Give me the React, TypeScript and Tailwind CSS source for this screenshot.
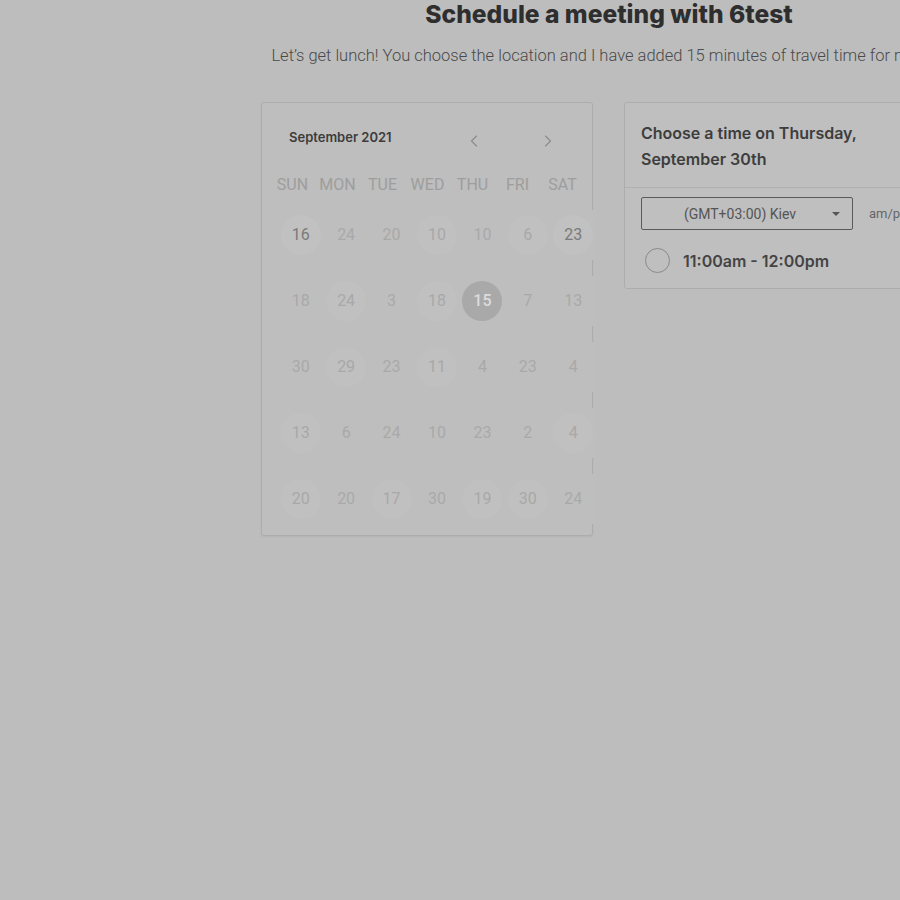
import React from 'react';
import { ChevronLeft, ChevronRight } from 'lucide-react';

type Day = { n: number; mark?: 'strong' | 'faint' | 'selected' };

const weekdays = ['SUN', 'MON', 'TUE', 'WED', 'THU', 'FRI', 'SAT'];

const weeks: Day[][] = [
  [{ n: 16, mark: 'strong' }, { n: 24 }, { n: 20 }, { n: 10, mark: 'faint' }, { n: 10 }, { n: 6, mark: 'faint' }, { n: 23, mark: 'strong' }],
  [{ n: 18 }, { n: 24, mark: 'faint' }, { n: 3 }, { n: 18, mark: 'faint' }, { n: 15, mark: 'selected' }, { n: 7 }, { n: 13 }],
  [{ n: 30 }, { n: 29, mark: 'faint' }, { n: 23 }, { n: 11, mark: 'faint' }, { n: 4 }, { n: 23 }, { n: 4 }],
  [{ n: 13, mark: 'faint' }, { n: 6 }, { n: 24 }, { n: 10 }, { n: 23 }, { n: 2 }, { n: 4, mark: 'faint' }],
  [{ n: 20, mark: 'faint' }, { n: 20 }, { n: 17, mark: 'faint' }, { n: 30 }, { n: 19, mark: 'faint' }, { n: 30, mark: 'faint' }, { n: 24 }],
];

const inter = "font-['Inter','Noto_Sans',sans-serif]";
const roboto = "font-['Roboto','Liberation_Sans',sans-serif]";

const DayCell = ({ day }: { day: Day }) => {
  let circle = '';
  let text = 'text-[#a9a9a9]';
  if (day.mark === 'strong') {
    circle = 'bg-[#c1c1c1]';
    text = 'text-[#7a7a7a]';
  } else if (day.mark === 'faint') {
    circle = 'bg-[#c0c0c0]';
    text = 'text-[#a8a8a8]';
  } else if (day.mark === 'selected') {
    circle = 'bg-[#a9a9a9]';
    text = 'text-[#dcdcdc] font-medium';
  }
  return (
    <div className="h-[50px] bg-[#bebebe] flex items-center justify-center">
      <div className={`w-10 h-10 rounded-full flex items-center justify-center ${circle}`}>
        <span className={`${roboto} text-base ${text}`}>{day.n}</span>
      </div>
    </div>
  );
};

export default function App() {
  return (
    <div className="w-full h-[900px] overflow-hidden bg-[#bdbdbd]">
      <div className="ml-[261px] w-[696px]">
        {/* Heading */}
        <h1 className={`${inter} text-center text-[24.6px] leading-[28px] font-extrabold text-[#2e2e2e]`}>
          Schedule a meeting with 6test
        </h1>
        <p className={`${roboto} mt-[16px] text-center text-[16.5px] leading-[24px] font-light text-[#4a4a4a] whitespace-nowrap`}>
          Let’s get lunch! You choose the location and I have added 15 minutes of travel time for myself.
        </p>

        <div className="mt-[34px] flex gap-[31px] items-start">
          {/* Calendar */}
          <div className="w-[332px] h-[434px] bg-[#bebebe] border border-[#adadad] rounded-[3px] shadow-[0_1px_2px_rgba(0,0,0,0.05)]">
            <div className="flex items-center h-[64px] pl-[27px] pr-[34px] pt-[6px]">
              <span className={`${inter} text-[13px] font-semibold text-[#3c3c3c]`}>September 2021</span>
              <div className="ml-auto flex items-center gap-[54px] mt-[5px] text-[#8c8c8c]">
                <ChevronLeft size={20} strokeWidth={1.4} />
                <ChevronRight size={20} strokeWidth={1.4} />
              </div>
            </div>
            <div className="grid grid-cols-7 w-[315px] ml-[8px] mt-[6px]">
              {weekdays.map((w) => (
                <div key={w} className={`${roboto} text-center text-base text-[#9d9d9d] leading-[24px]`}>
                  {w}
                </div>
              ))}
            </div>
            <div className="mt-[13px] ml-[16px] w-[318px] grid grid-cols-7 gap-y-[16px]">
              {weeks.flat().map((d, i) => (
                <DayCell key={i} day={d} />
              ))}
            </div>
          </div>

          {/* Time picker */}
          <div className="w-[333px] bg-[#bfbfbf] border border-[#adadad] rounded-[3px]">
            <div className="h-[85px] border-b border-[#b0b0b0] px-4 pt-[17px]">
              <p className={`${inter} text-base font-semibold leading-[26px] text-[#3d3d3d]`}>
                Choose a time on Thursday,
                <br />
                September 30th
              </p>
            </div>
            <div className="px-4 pt-[9px] pb-[12px]">
              <div className="flex items-center gap-4">
                <div className="w-[212px] h-[33px] border border-[#5a5a5a] rounded-[2px] flex items-center relative">
                  <span className={`${roboto} text-sm text-[#555] w-full text-center pr-[14px]`}>(GMT+03:00) Kiev</span>
                  <span className="absolute right-[12px] top-[14px] w-0 h-0 border-l-[4px] border-r-[4px] border-t-[4px] border-l-transparent border-r-transparent border-t-[#555]" />
                </div>
                <span className={`${roboto} text-[13px] text-[#666]`}>am/pm</span>
              </div>
              <div className="flex items-center mt-[18px] ml-[4px] gap-[13px] pb-[3px]">
                <div className="w-[25px] h-[25px] rounded-full border-[1.5px] border-[#8a8a8a]" />
                <span className={`${inter} text-base font-semibold text-[#444]`}>11:00am - 12:00pm</span>
              </div>
            </div>
          </div>
        </div>
      </div>
    </div>
  );
}
